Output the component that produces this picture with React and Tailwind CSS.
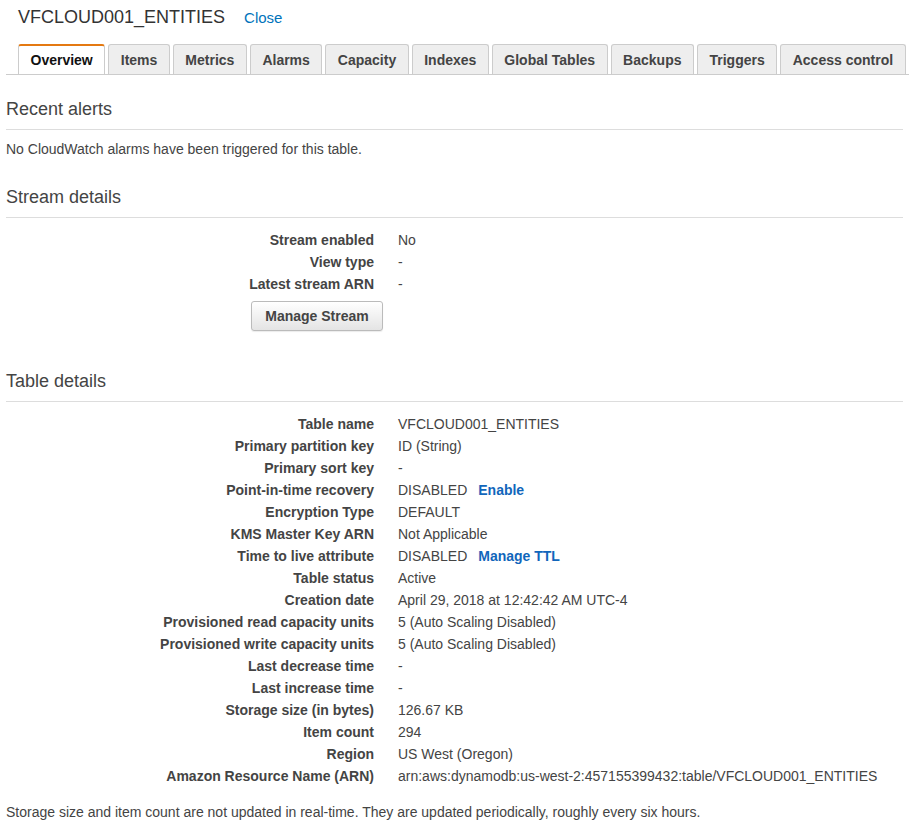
import React from "react";

const tabs = [
  "Overview",
  "Items",
  "Metrics",
  "Alarms",
  "Capacity",
  "Indexes",
  "Global Tables",
  "Backups",
  "Triggers",
  "Access control",
];

const streamRows = [
  ["Stream enabled", "No"],
  ["View type", "-"],
  ["Latest stream ARN", "-"],
];

const tableRows = [
  ["Table name", "VFCLOUD001_ENTITIES"],
  ["Primary partition key", "ID (String)"],
  ["Primary sort key", "-"],
  ["Point-in-time recovery", "DISABLED", "Enable"],
  ["Encryption Type", "DEFAULT"],
  ["KMS Master Key ARN", "Not Applicable"],
  ["Time to live attribute", "DISABLED", "Manage TTL"],
  ["Table status", "Active"],
  ["Creation date", "April 29, 2018 at 12:42:42 AM UTC-4"],
  ["Provisioned read capacity units", "5 (Auto Scaling Disabled)"],
  ["Provisioned write capacity units", "5 (Auto Scaling Disabled)"],
  ["Last decrease time", "-"],
  ["Last increase time", "-"],
  ["Storage size (in bytes)", "126.67 KB"],
  ["Item count", "294"],
  ["Region", "US West (Oregon)"],
  ["Amazon Resource Name (ARN)", "arn:aws:dynamodb:us-west-2:457155399432:table/VFCLOUD001_ENTITIES"],
];

export default function App() {
  return (
    <div className="min-h-screen w-[909px] overflow-hidden bg-white font-['Liberation_Sans',Arial,sans-serif] text-[14px] leading-[20px] text-[#444]">
      {/* header */}
      <div className="flex items-baseline px-[18px] pt-[5px] leading-[24px]">
        <span className="text-[18px] text-[#333]">VFCLOUD001_ENTITIES</span>
        <a className="ml-[19px] text-[15px] text-[#0073bb]">Close</a>
      </div>

      {/* tabs, the row runs past the right edge */}
      <div className="mt-[14px] ml-[6px] flex flex-nowrap gap-[3px] overflow-hidden border-b border-[#ccc] pl-[12px]">
        {tabs.map((t, i) => (
          <Tab key={t} label={t} active={i === 0} />
        ))}
        <div className="h-[30px] w-[40px] shrink-0 rounded-t-[3px] border-x border-t border-[#ccc] bg-[#eee]" />
      </div>

      {/* recent alerts */}
      <Heading className="mt-[22px]">Recent alerts</Heading>
      <p className="mt-[9px] px-[6px]">No CloudWatch alarms have been triggered for this table.</p>

      {/* stream */}
      <Heading className="mt-[26px]">Stream details</Heading>
      <div className="mt-[11px]">
        <DetailRows rows={streamRows} />
      </div>
      <div className="mt-[6px] pl-[251px]">
        <button className="h-[30px] w-[132px] rounded-[3px] border border-[#bbb] bg-gradient-to-b from-white to-[#e4e4e4] text-[14px] font-bold text-[#444] shadow-[0_1px_1px_rgba(0,0,0,0.08)]">
          Manage Stream
        </button>
      </div>

      {/* table */}
      <Heading className="mt-[38px]">Table details</Heading>
      <div className="mt-[11px]">
        <DetailRows rows={tableRows} />
      </div>

      <p className="mt-[15px] px-[6px]">
        Storage size and item count are not updated in real-time. They are updated periodically, roughly every six hours.
      </p>
    </div>
  );
}

function Tab({ label, active }) {
  if (active) {
    return (
      <div className="-mb-px h-[31px] shrink-0 whitespace-nowrap rounded-t-[3px] border-x border-t-2 border-[#ccc] border-t-[#e47911] bg-white px-[11.5px] pt-[4px] font-bold text-[#111]">
        {label}
      </div>
    );
  }
  return (
    <div className="h-[30px] shrink-0 whitespace-nowrap rounded-t-[3px] border-x border-t border-[#ccc] bg-[#eee] px-[11.5px] pt-[5px] font-bold text-[#444]">
      {label}
    </div>
  );
}

function Heading({ children, className = "" }) {
  return (
    <h2 className={`mx-[6px] border-b border-[#ddd] pb-[8px] text-[18px] leading-[24px] text-[#444] ${className}`}>
      {children}
    </h2>
  );
}

function DetailRows({ rows }) {
  return (
    <div className="grid grid-cols-[368px_1fr] gap-x-[24px] px-[6px]">
      {rows.map(([label, value, link]) => (
        <React.Fragment key={label}>
          <div className="text-right font-bold leading-[22px] text-[#444]">{label}</div>
          <div className="whitespace-nowrap leading-[22px]">
            {value}
            {link && <a className="ml-[11px] font-bold text-[#1166bb]">{link}</a>}
          </div>
        </React.Fragment>
      ))}
    </div>
  );
}
